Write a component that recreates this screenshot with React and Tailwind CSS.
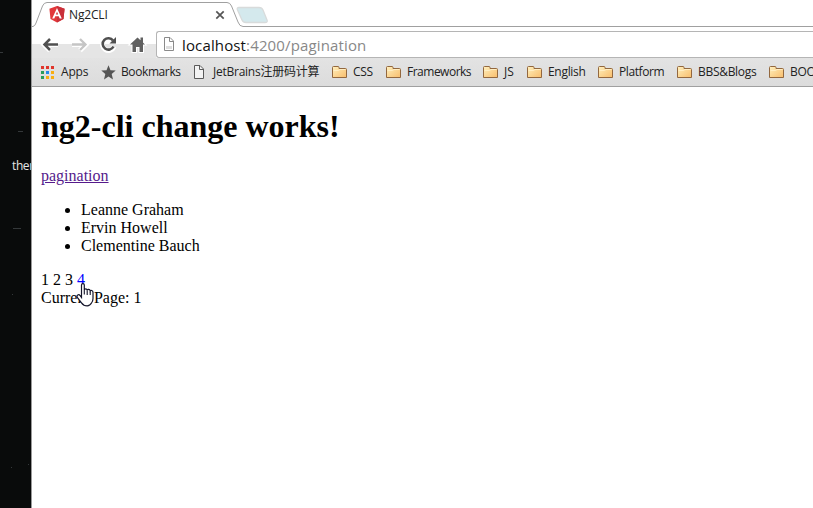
import React from "react";

const uiFont = "font-['Open_Sans','Noto_Sans_CJK_SC',sans-serif]";

function Angular() {
  return (
    <svg width="16" height="17" viewBox="0 0 16 17" className="shrink-0">
      <path d="M8 0 15.6 2.8 14.5 13 8 16.6 1.5 13 .4 2.8Z" fill="#e2373a" />
      <path d="M8 0 15.6 2.8 14.5 13 8 16.6Z" fill="#c9303a" />
      <path d="M8 2 3.2 12.600h2.100l1-2.400h3.400l1 2.400h2.100ZM8 5.800 9.200 8.500H6.800Z" fill="#fff" fillRule="evenodd" />
    </svg>
  );
}

function Page({ light }) {
  return (
    <svg width="12" height="15" viewBox="0 0 12 15" className="shrink-0">
      <path d="M1.500 .5H7L10.500 4V13.500H1.500Z" fill={light ? "#fff" : "#f3f3f3"} stroke={light ? "#8a8a8a" : "#5a5a5a"} />
      {light && <path d="M3 9h6v3H3Z" fill="#dedede" />}
      <path d="M6.500 .5V4.500H10.500" fill="none" stroke={light ? "#8a8a8a" : "#5a5a5a"} />
    </svg>
  );
}

function Folder() {
  return (
    <svg width="16" height="14" viewBox="0 0 16 14" className="shrink-0">
      <defs>
        <linearGradient id="folder" x1="0" y1="0" x2="1" y2="1">
          <stop offset="0" stopColor="#fff0bd" />
          <stop offset="1" stopColor="#f8bd6c" />
        </linearGradient>
      </defs>
      <path d="M.5 12.500V2.500Q.5 1.500 1.500 1.500H6q1 0 1 1v1h6.500q1 0 1 1v8Z" fill="url(#folder)" stroke="#93683f" />
      <path d="M1.500 5.500H6.500L8 4.500H13.500" fill="none" stroke="#fff3cd" strokeWidth=".8" />
    </svg>
  );
}

function AppsGrid() {
  const colors = ["#e0352b", "#e0352b", "#e0352b", "#2b9c59", "#2589e8", "#f8ae12", "#2b9c59", "#f8ae12", "#f8ae12"];
  return (
    <svg width="13" height="13" viewBox="0 0 13 13" className="shrink-0" shapeRendering="crispEdges">
      {colors.map((c, i) => <rect key={i} x={(i % 3) * 5} y={Math.floor(i / 3) * 5} width="3" height="3" fill={c} />)}
    </svg>
  );
}

function Star() {
  return (
    <svg width="15" height="15" viewBox="0 0 15 15" className="shrink-0">
      <path d="m7.500.3 2 5 5.200.3-4 3.500 1.300 5.300-4.500-3-4.500 3 1.300-5.300-4-3.500 5.200-.3Z" fill="#555" />
    </svg>
  );
}

const bookmarks = [
  { t: "Apps", icon: <AppsGrid />, box: "w-[60px] gap-[7px]", text: "tracking-[-0.2px]" },
  { t: "Bookmarks", icon: <Star />, box: "w-[92px] gap-[5px]", text: "tracking-[-0.4px]" },
  { t: "JetBrains注册码计算", icon: <Page />, box: "w-[139px] gap-2", text: "tracking-[-0.25px]" },
  { t: "CSS", icon: <Folder />, box: "w-[54px] gap-[5px]", text: "tracking-[-0.3px]" },
  { t: "Frameworks", icon: <Folder />, box: "w-[97px] gap-[5px]", text: "tracking-[-0.5px]" },
  { t: "JS", icon: <Folder />, box: "w-[44px] gap-[5px]", text: "tracking-[0px]" },
  { t: "English", icon: <Folder />, box: "w-[71px] gap-[5px]", text: "tracking-[-0.3px]" },
  { t: "Platform", icon: <Folder />, box: "w-[79px] gap-[5px]", text: "tracking-[-0.4px]" },
  { t: "BBS&Blogs", icon: <Folder />, box: "w-[92px] gap-[5px]", text: "tracking-[-0.3px]" },
  { t: "BOO", icon: <Folder />, box: "w-[60px] gap-[5px]", text: "tracking-[-0.3px]" },
];

function TabStrip() {
  return (
    <div className="relative h-7">
      <svg width="781" height="28" viewBox="0 0 781 28" className="absolute inset-0">
        <path d="M0 26.500H1Q3 26 4 23L10.500 6Q12 2.500 15 2.500H195Q198 2.500 199.500 6L206 22Q207.500 26.500 211 26.500H781" fill="none" stroke="#a0a0a0" />
        <path d="M207 7.500H227Q230 7.500 231 10L235 20Q236 22.500 233 22.500H214Q211 22.500 210 20L205.500 10Q204.500 7.500 207 7.500Z" fill="#d4e9ed" stroke="#d8dbdb" strokeWidth="1.300" />
      </svg>
      <div className="relative flex h-7 items-center pl-[17px] pt-px">
        <Angular />
        <span className="ml-1 w-[146px] text-[12px] leading-4 tracking-[-0.15px] text-[#222]">Ng2CLI</span>
        <svg width="10" height="10" viewBox="0 0 10 10"><path d="m1.300 1.300 7.400 7.400m0-7.400-7.400 7.400" stroke="#555" strokeWidth="1.700" /></svg>
      </div>
    </div>
  );
}

function NavIcons() {
  return (
    <svg width="124" height="30" viewBox="0 0 124 30" className="shrink-0">
      <path d="M0 16H124V30H0Z" fill="#e5e5e5" />
      <g fill="none">
        <path d="M12 16.500H26M18 10.500 12 16.500l6 6M40 16.500H54M48 10.500l6 6-6 6" stroke="#fff" strokeWidth="5" />
        <path d="M12 16.500H26M18 11 12.500 16.500l5.500 5.500" stroke="#505050" strokeWidth="2.500" />
        <path d="M40 16.500H54M48 11l5.500 5.500-5.500 5.500" stroke="#c5c5c5" strokeWidth="2.300" />
        <path d="M81 12.500A6 6 0 1 0 82 18.500" stroke="#fff" strokeWidth="5" />
        <path d="M81 12.500A5.700 5.700 0 1 0 81.500 18.500" stroke="#505050" strokeWidth="2.600" />
      </g>
      <path d="M84 9V15.500H77.500Z" fill="#505050" />
      <path d="m105.500 9.500 7.500 7h-2V24h-3.500V19h-3.500v5h-3.500v-7.500H98ZM108.500 9.500h2.500V15l-2.500-2.300Z" fill="#606060" stroke="#fff" strokeWidth="2" paintOrder="stroke" />
    </svg>
  );
}

function Browser() {
  return (
    <div className="flex h-[508px] min-w-0 flex-1 flex-col overflow-hidden bg-white">
      <header className={`${uiFont} h-[87px] shrink-0 border-b border-[#a0a0a0] bg-white`}>
        <TabStrip />
        <div className="flex h-[30px]">
          <NavIcons />
          <div className="mt-[3px] flex h-[27px] flex-1 items-center rounded-l-[3px] border border-r-0 border-[#b5b5b5] bg-white pl-[6px]">
            <Page light />
            <span className="ml-[7px] whitespace-nowrap text-[15px] leading-5 tracking-[0.14px] text-[#888]"><span className="text-[#111]">localhost</span>:4200/pagination</span>
          </div>
        </div>
        <nav className="flex h-7 items-center bg-gradient-to-b from-[#e3e3e3] to-[#dcdcdc] pl-[9px]">
          {bookmarks.map((b) => (
            <div key={b.t} className={`flex shrink-0 items-center whitespace-nowrap text-[12px] leading-4 text-[#222] ${b.box}`}>
              {b.icon}<span className={b.text}>{b.t}</span>
            </div>
          ))}
        </nav>
      </header>
      <main className="relative flex-1 pl-[9px] pt-[21px] font-['Liberation_Serif',serif] text-[16px] leading-[18px] text-black">
        <h1 className="text-[32px] font-bold leading-[37px]">ng2-cli change works!</h1>
        <a className="mt-[22px] block w-fit text-[#551a8b] underline">pagination</a>
        <ul className="mt-4 list-disc pl-10">
          <li>Leanne Graham</li>
          <li>Ervin Howell</li>
          <li>Clementine Bauch</li>
        </ul>
        <div className="mt-4">1 2 3 <span className="text-[#0000ff]">4</span></div>
        <div>Current Page: 1</div>
        <svg width="19" height="25" viewBox="0 0 19 25" className="absolute left-[44px] top-[196px]">
          <path d="M5.500 14.500V2Q5.500.7 6.900.7T8.300 2V7Q8.500 5.800 9.700 5.800T11.200 7.300Q11.500 6.300 12.700 6.400T14.200 8Q14.500 7.200 15.700 7.500T17 9.200V15.500Q17 18 15.500 20 14 22.800 11.200 22.800 7.500 22.800 5.500 19.800L1.300 14.400Q.5 12.800 1.800 12T4 12.500Z" fill="#fff" stroke="#15152a" strokeWidth="1.200" />
          <path d="M8.300 7v4.500M11.200 7.500V12M14.200 8.500V12" fill="none" stroke="#15152a" strokeWidth="1.100" />
        </svg>
      </main>
    </div>
  );
}

export default function App() {
  return (
    <div className="flex h-[508px] w-[813px] overflow-hidden bg-[#090b0b]">
      <aside className={`${uiFont} relative h-full w-8 shrink-0 overflow-hidden border-r border-[#999] bg-[#090b0b] pl-3 pt-[158px] text-[12px] leading-4 tracking-[-0.4px] text-[#e5e5e5]`}>
        ther
        <svg width="31" height="508" className="absolute left-0 top-0">
          <g fill="#34383a"><path d="M13 228h8v1h-8zM0 52h3v1H0zM18 131h5v1h-5z" /><path d="M12 294h1v1h-1zM28 464h1v1h-1zM11 467h1v1h-1z" /></g>
        </svg>
      </aside>
      <Browser />
    </div>
  );
}
